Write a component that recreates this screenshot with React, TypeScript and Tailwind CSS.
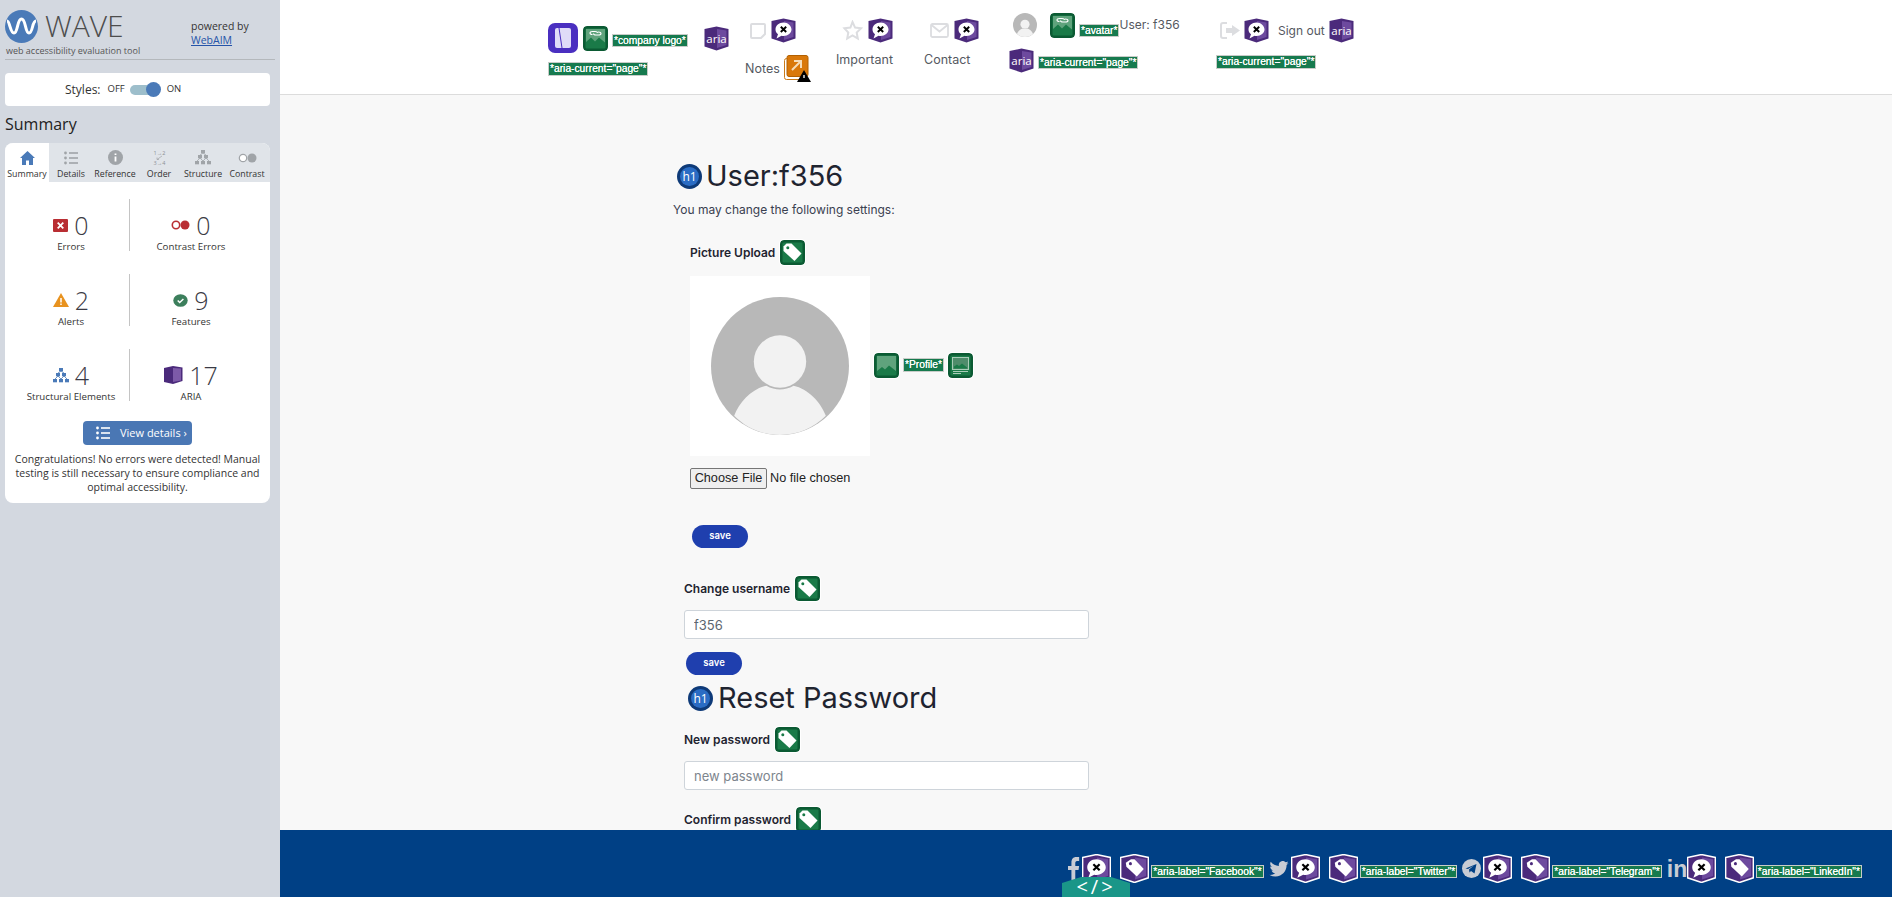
import type { ReactNode } from "react";

const stats = [
  { icon: "error", n: "0", label: "Errors" },
  { icon: "contrast", n: "0", label: "Contrast Errors" },
  { icon: "alert", n: "2", label: "Alerts" },
  { icon: "feature", n: "9", label: "Features" },
  { icon: "structure", n: "4", label: "Structural Elements" },
  { icon: "aria", n: "17", label: "ARIA" },
];

function Shield({ outline, children }: { outline?: boolean; children: ReactNode }) {
  return (
    <svg width={outline ? 29 : 25} height={outline ? 29 : 25} viewBox="0 0 25 25" className="shrink-0">
      <path d="M0.500 3 12.500 0.500 24.500 3V20.500L12.500 24.500 0.500 20.500Z" fill="#4b2a7b" stroke={outline ? "#ffffff" : "none"} strokeWidth={outline ? 1.4 : 0} />
      <path d="M13 3 22.500 4.500V19L13 22Z" fill="#6d4a9e" />
      {children}
    </svg>
  );
}

function XBadge({ outline }: { outline?: boolean }) {
  return (
    <Shield outline={outline}>
      <path d="M12.500 4.500C8 4.500 4.500 7.500 4.500 11.500c0 2 1 3.700 2.500 4.700L5.500 20.500l5-2.700c.7.200 1.300.200 2 .200 4.500 0 8-3 8-6.500S17 4.500 12.500 4.500Z" fill="#fff" />
      <path d="M9.800 8.800l5.400 5.200M15.200 8.800l-5.400 5.200" stroke="#000" strokeWidth="1.900" />
    </Shield>
  );
}

function AriaBadge() {
  return (
    <Shield>
      <text x="12.500" y="16.500" textAnchor="middle" fontSize="11.500" fill="#fff" fontFamily="'Open Sans', sans-serif">aria</text>
    </Shield>
  );
}

function TagPurple() {
  return (
    <Shield outline>
      <path d="M5 7.500 9.500 4.500h3l8 8.500-6 6.500-9-8.500Z" fill="#fff" />
      <circle cx="9" cy="8.300" r="1.300" fill="#4b2a7b" />
    </Shield>
  );
}

function GreenBox({ children }: { children: ReactNode }) {
  return (
    <svg width="25" height="25" viewBox="0 0 25 25" className="shrink-0 rounded-[4px] ring-1 ring-white">
      <rect width="25" height="25" rx="4" fill="#0b5a33" />
      <rect x="2.500" y="2.500" width="20" height="20" rx="1" fill="#1a7a48" />
      {children}
    </svg>
  );
}

function TagGreen() {
  return (
    <GreenBox>
      <path d="M3.500 6.500 6.500 3.500h5l10 10-7 7.500L3.500 11Z" fill="#fff" />
      <circle cx="7.800" cy="7.800" r="1.500" fill="#1a7a48" />
    </GreenBox>
  );
}

function LinkedImage() {
  return (
    <GreenBox>
      <rect x="3" y="3" width="19" height="19" fill="#5fa37c" />
      <path d="M3 22v-6l5-4.500 4 4 4-4 6 5V22Z" fill="#1a7a48" />
      <path d="M9.500 8.500c-2 0-2.500-.7-2.500-1.500s1-1.500 2.500-1.500h2.500c1.500 0 2.500.7 2.500 1.500M15 6c2 0 3 .7 3 1.500S17 9 15.500 9H13c-1.500 0-2.500-.7-2.500-1.500" stroke="#fff" strokeWidth="1.100" fill="none" />
    </GreenBox>
  );
}

function PlainImage() {
  return (
    <GreenBox>
      <rect x="3" y="3" width="19" height="19" fill="#5fa37c" />
      <path d="M3 22v-4l5-4 3 2.500 4-4 7 5.500v4Z" fill="#1a7a48" />
    </GreenBox>
  );
}

function LongAlt() {
  return (
    <GreenBox>
      <rect x="4.500" y="4.500" width="16" height="12" fill="#4f8c6b" stroke="#a9cdb8" />
      <path d="M6 15.500v-2l3-2 2 1.500 3-2.500 5 4v1Z" fill="#1a7a48" />
      <path d="M5 18.500h15M5 20.500h8" stroke="#a9cdb8" strokeWidth="1.200" />
    </GreenBox>
  );
}

function WaveLabel({ children }: { children: ReactNode }) {
  return (
    <span className="shrink-0 whitespace-nowrap border border-[#c8ccc8] bg-[#167a4e] px-px text-[10.250px] leading-[12px] font-normal text-white [text-shadow:0_0_0.6px_#fff] font-['Liberation_Sans',sans-serif]">
      {children}
    </span>
  );
}

function H1Badge() {
  return (
    <svg width="25" height="25" viewBox="0 0 25 25" className="shrink-0">
      <circle cx="12.500" cy="12.500" r="12.500" fill="#0e3a78" />
      <circle cx="12.500" cy="12.500" r="9.500" fill="#2a6cc4" />
      <text x="12.500" y="17" textAnchor="middle" fontSize="12" fill="#fff" fontFamily="'Open Sans', sans-serif">h1</text>
    </svg>
  );
}

function Avatar({ size }: { size: number }) {
  return (
    <svg width={size} height={size} viewBox="0 0 137 137" className="shrink-0">
      <circle cx="68.500" cy="68.500" r="68.500" fill="#b8b8b8" />
      <circle cx="68.500" cy="64" r="26" fill="#f2f2f2" />
      <path d="M23 118c5-14 18-27 32-30 9 5 18 5 27 0 14 3 27 16 32 30-12 12-27 19-45.500 19S35 130 23 118Z" fill="#f2f2f2" />
    </svg>
  );
}

function StructureIcon({ color }: { color: string }) {
  const cells = [
    [6, 0], [3, 5], [9, 5], [0, 11], [6, 11], [12, 11],
  ];
  return (
    <svg width="16" height="15" viewBox="0 0 16 15">
      <path d="M8 3 5 5M8 3l3 2M5 8 2 11M5 8l3 3M11 8l-3 3M11 8l3 3" stroke={color} strokeWidth="0.800" />
      {cells.map(([x, y]) => (
        <rect key={`${x}-${y}`} x={x} y={y} width="4" height="3.300" fill={color} />
      ))}
    </svg>
  );
}

function SummaryIcon({ name }: { name: string }) {
  if (name === "error") {
    return (
      <svg width="15" height="13" viewBox="0 0 15 13">
        <rect width="15" height="13" rx="1" fill="#b92e33" />
        <path d="M4.700 3.700l5.600 5.600M10.300 3.700 4.700 9.300" stroke="#fff" strokeWidth="1.800" />
      </svg>
    );
  }
  if (name === "contrast") {
    return (
      <svg width="19" height="10" viewBox="0 0 19 10">
        <circle cx="5" cy="5" r="3.700" fill="#fff" stroke="#b92e33" strokeWidth="1.600" />
        <circle cx="14" cy="5" r="4.500" fill="#b92e33" />
      </svg>
    );
  }
  if (name === "alert") {
    return (
      <svg width="16" height="14" viewBox="0 0 16 14">
        <path d="M8 0 16 14H0Z" fill="#e8921f" />
        <path d="M8 5v4.500M8 10.500v1.500" stroke="#fff" strokeWidth="1.500" />
      </svg>
    );
  }
  if (name === "feature") {
    return (
      <svg width="15" height="13" viewBox="0 0 15 13">
        <ellipse cx="7.500" cy="6.500" rx="7.200" ry="6.300" fill="#3c7f5c" />
        <path d="M4.700 6.500l2 2 3.700-3.500" stroke="#fff" strokeWidth="1.500" fill="none" />
      </svg>
    );
  }
  if (name === "structure") {
    return <StructureIcon color="#4a7ab8" />;
  }
  return (
    <svg width="19" height="18" viewBox="0 0 19 18">
      <path d="M0 2 9 0l9.500 1.500V15L9 18 0 16Z" fill="#4b2a7b" />
      <path d="M9 2l8 .5V14.500L9 16Z" fill="#7d5aa8" />
    </svg>
  );
}

function ListIcon({ color, w = 14 }: { color: string; w?: number }) {
  return (
    <svg width={w} height={w} viewBox="0 0 14 14">
      {[2, 7, 12].map((y) => (
        <g key={y}>
          <circle cx="1.500" cy={y} r="1.400" fill={color} />
          <rect x="5" y={y - 0.8} width="9" height="1.600" fill={color} />
        </g>
      ))}
    </svg>
  );
}

function TabItem({ label, active, children }: { label: string; active?: boolean; children: ReactNode }) {
  return (
    <div className={`w-[44px] h-[39px] flex flex-col items-center ${active ? "bg-white rounded-tl-lg" : ""}`}>
      <div className="h-[22px] flex items-end justify-center">{children}</div>
      <div className="mt-[3px] text-[8.800px] leading-[12px] whitespace-nowrap text-[#333]">{label}</div>
    </div>
  );
}

function Sidebar() {
  return (
    <aside className="w-[280px] shrink-0 h-full bg-[#d3d8e0] px-[5px] font-['Open_Sans',sans-serif] text-[#333]">
      <div className="flex h-[60px] border-b border-[#b4b8bc]">
        <div className="w-[186px]">
          <div className="flex items-center h-[32px] mt-[10px]">
            <svg width="33" height="33" viewBox="0 0 33 33" className="shrink-0">
              <circle cx="16.500" cy="16.500" r="16.500" fill="#4a7ab8" />
              <path d="M2 11c3 0 3 12 7 12s3-14 7.500-14S20 23 24 23s3-12 7-12" stroke="#fff" strokeWidth="3" fill="none" />
            </svg>
            <span className="ml-[7px] text-[30px] leading-[32px] font-light text-[#4d4d4d]">WAVE</span>
          </div>
          <div className="ml-px mt-[2px] text-[9px] leading-[14px] text-[#555] whitespace-nowrap">web accessibility evaluation tool</div>
        </div>
        <div className="mt-[19px] text-[10.500px] leading-[14px] text-[#333]">
          <div>powered by</div>
          <a className="text-[#2553a8] underline">WebAIM</a>
        </div>
      </div>
      <div className="mt-[13px] w-[265px] h-[33px] bg-white rounded flex items-center text-[11px]">
        <span className="ml-[60px] text-[12px]">Styles:</span>
        <span className="ml-[7px] text-[9.500px]">OFF</span>
        <div className="relative ml-[5px] w-[30px] h-[10px] rounded-full bg-[#9dbecb]">
          <span className="absolute right-[-1px] top-[-3px] w-[15px] h-[15px] rounded-full bg-[#4a7ab8]" />
        </div>
        <span className="ml-[7px] text-[9.500px]">ON</span>
      </div>
      <h2 className="mt-[6px] text-[16px] leading-[24px] text-[#222]">Summary</h2>
      <div className="mt-[7px] w-[265px] h-[360px] bg-white rounded-lg flex flex-col">
        <div className="flex h-[39px] shrink-0 bg-[#e0e4e9] rounded-t-lg">
          <TabItem label="Summary" active>
            <svg width="15" height="14" viewBox="0 0 15 14">
              <path d="M7.500 0 15 7h-2v7H9V9.500H6V14H2V7H0Z" fill="#4a7ab8" />
            </svg>
          </TabItem>
          <TabItem label="Details"><ListIcon color="#a0a4a8" /></TabItem>
          <TabItem label="Reference">
            <svg width="15" height="15" viewBox="0 0 15 15">
              <circle cx="7.500" cy="7.500" r="7.500" fill="#a0a4a8" />
              <path d="M7.500 6.500V11.500M7.500 3.500V5" stroke="#fff" strokeWidth="1.800" />
            </svg>
          </TabItem>
          <TabItem label="Order">
            <svg width="15" height="15" viewBox="0 0 15 15">
              <text x="7.500" y="5" textAnchor="middle" fontSize="5.500" fill="#8c9094">1→2</text>
              <path d="M10 6 5 9.500M5 7.500v2h2" stroke="#a0a4a8" strokeWidth="0.700" fill="none" />
              <text x="7.500" y="14.500" textAnchor="middle" fontSize="5.500" fill="#8c9094">3→4</text>
            </svg>
          </TabItem>
          <TabItem label="Structure"><StructureIcon color="#a0a4a8" /></TabItem>
          <TabItem label="Contrast">
            <svg width="19" height="10" viewBox="0 0 19 10" className="mb-[2px]">
              <circle cx="5" cy="5" r="3.700" fill="#fff" stroke="#a0a4a8" strokeWidth="1.200" />
              <circle cx="14" cy="5" r="4.500" fill="#a0a4a8" />
            </svg>
          </TabItem>
        </div>
        <div className="mt-[17px] grid grid-cols-[125px_122px] gap-y-[23px]">
          {stats.map((s, i) => (
            <div key={s.label} className={`h-[52px] flex flex-col items-center ${i % 2 === 0 ? "border-r border-[#c4c4c4] pl-[8px]" : ""}`}>
              <div className="mt-[10px] h-[32px] flex items-center gap-[6px]">
                <SummaryIcon name={s.icon} />
                <span className="text-[25px] leading-[32px] font-light text-[#3a3a44]">{s.n}</span>
              </div>
              <div className="mt-[-1px] text-[9.700px] leading-[14px] whitespace-nowrap">{s.label}</div>
            </div>
          ))}
        </div>
        <div className="mt-[20px] self-center w-[109px] h-[24px] rounded bg-[#4a77b4] flex items-center text-white text-[11px]">
          <span className="ml-[13px]"><ListIcon color="#fff" /></span>
          <span className="ml-[10px] whitespace-nowrap">View details ›</span>
        </div>
        <p className="mt-[7px] px-[5px] text-center text-[10.500px] leading-[14px] text-[#333]">
          Congratulations! No errors were detected! Manual testing is still necessary to ensure compliance and optimal accessibility.
        </p>
      </div>
    </aside>
  );
}

function NavItem({ icon, label }: { icon: ReactNode; label: string }) {
  return (
    <div className="flex flex-col">
      <div className="flex items-center gap-[5px] h-[25px]">
        {icon}
        <XBadge />
      </div>
      <div className="mt-[8px] ml-[-6px] text-[12.500px] leading-[18px] text-[#55595f]">{label}</div>
    </div>
  );
}

function Header() {
  return (
    <header className="h-[95px] shrink-0 bg-white border-b border-[#dcdcdc] flex items-start pl-[268px] font-['Inter',sans-serif]">
      <div className="w-[201px] pt-[23px]">
        <div className="flex items-center">
          <svg width="30" height="30" viewBox="0 0 30 30" className="shrink-0">
            <rect width="30" height="30" rx="7" fill="#4a2fc0" />
            <rect x="7" y="5" width="16" height="20" rx="2" fill="#e0dcf8" />
            <path d="M11 5l3 20" stroke="#4a2fc0" strokeWidth="1" />
          </svg>
          <span className="ml-[5px]"><LinkedImage /></span>
          <span className="ml-[4px]"><WaveLabel>*company logo*</WaveLabel></span>
          <span className="ml-[16px]"><AriaBadge /></span>
        </div>
        <div className="mt-[9px] flex"><WaveLabel>*aria-current="page"*</WaveLabel></div>
      </div>
      <div className="w-[93px] pt-[18px]">
        <div className="flex items-center gap-[4px] h-[25px]">
          <svg width="18" height="18" viewBox="0 0 18 18" fill="none" stroke="#dcdde0" strokeWidth="2">
            <path d="M2 3a1 1 0 0 1 1-1h12a1 1 0 0 1 1 1v9l-4 4H3a1 1 0 0 1-1-1Z" />
          </svg>
          <XBadge />
        </div>
        <div className="flex items-center mt-[12px] ml-[-4px]">
          <span className="text-[12.500px] leading-[18px] text-[#55595f]">Notes</span>
          <svg width="27" height="27" viewBox="0 0 27 27" className="ml-[4px]">
            <rect x="0.500" y="3.500" width="21" height="21" rx="2" fill="#fff" stroke="#c97a1a" />
            <rect x="3" y="0.500" width="21" height="21" rx="2" fill="#d9780a" stroke="#b26000" />
            <path d="M8 15l8-8M10 6h7v7" stroke="#f6dcb8" strokeWidth="2" fill="none" />
            <path d="M20 15l7 12H13Z" fill="#000" />
            <path d="M20 20v3" stroke="#fff" strokeWidth="1.300" />
          </svg>
        </div>
      </div>
      <div className="w-[88px] pt-[18px]">
        <NavItem
          label="Important"
          icon={
            <svg width="21" height="21" viewBox="0 0 21 21" fill="none" stroke="#dcdde0" strokeWidth="2">
              <path d="M10.500 2l2.600 5.600 6 .7-4.400 4.200 1.100 6-5.300-3-5.300 3 1.100-6L2.400 8.300l6-.7Z" />
            </svg>
          }
        />
      </div>
      <div className="w-[79px] pt-[18px]">
        <NavItem
          label="Contact"
          icon={
            <svg width="19" height="15" viewBox="0 0 19 15" fill="none" stroke="#dcdde0" strokeWidth="1.800">
              <rect x="1" y="1" width="17" height="13" rx="1.500" />
              <path d="M1.500 2l8 6.500 8-6.500" />
            </svg>
          }
        />
      </div>
      <div className="w-[207px] pt-[13px]">
        <div className="flex items-start">
          <span className="ml-[4px]"><Avatar size={24} /></span>
          <span className="ml-[13px]"><LinkedImage /></span>
          <span className="ml-[4px] mt-[3px]"><WaveLabel>*avatar*</WaveLabel></span>
          <span className="mt-[3px] text-[12px] leading-[18px] text-[#55595f] whitespace-nowrap">User: f356</span>
        </div>
        <div className="mt-[8px] flex items-center">
          <AriaBadge />
          <span className="ml-[4px] mt-[-2px]"><WaveLabel>*aria-current="page"*</WaveLabel></span>
        </div>
      </div>
      <div className="pt-[18px]">
        <div className="flex items-center h-[25px]">
          <svg width="21" height="17" viewBox="0 0 21 17" className="ml-[4px]">
            <path d="M7 1H3a2 2 0 0 0-2 2v11a2 2 0 0 0 2 2h4" fill="none" stroke="#dcdde0" strokeWidth="2" />
            <path d="M12 3l8 5.500-8 5.500v-3H6V6h6Z" fill="#dcdde0" />
          </svg>
          <span className="ml-[3px]"><XBadge /></span>
          <span className="ml-[9px] text-[12px] leading-[18px] text-[#55595f] whitespace-nowrap">Sign out</span>
          <span className="ml-[4px]"><AriaBadge /></span>
        </div>
        <div className="mt-[12px] flex"><WaveLabel>*aria-current="page"*</WaveLabel></div>
      </div>
    </header>
  );
}

function FieldLabel({ children }: { children: string }) {
  return (
    <div className="flex items-center gap-[5px] h-[25px]">
      <span className="text-[12px] font-semibold text-[#1f2430]">{children}</span>
      <TagGreen />
    </div>
  );
}

function SaveButton() {
  return (
    <div className="w-[56px] h-[23px] rounded-full bg-[#1f3fae] flex items-center justify-center text-white text-[9.500px] font-semibold">save</div>
  );
}

function TextBox({ value, placeholder }: { value?: string; placeholder?: string }) {
  return (
    <input
      readOnly
      value={value}
      placeholder={placeholder}
      className="block w-[405px] h-[29px] bg-white border border-[#ced4da] rounded-[3px] px-[9px] text-[13px] text-[#5c6670] placeholder:text-[#7d858d] outline-none"
    />
  );
}

function Content() {
  return (
    <main className="flex-1 min-h-0 overflow-hidden bg-[#f8f8f8] font-['Inter',sans-serif]">
      <div className="ml-[393px] pt-[61px]">
        <div className="flex items-center ml-[4px] h-[40px]">
          <H1Badge />
          <h1 className="ml-[4px] text-[29px] leading-[40px] font-normal text-[#1f2430]">User:f356</h1>
        </div>
        <p className="mt-[4px] text-[12px] leading-[20px] text-[#3a4050]">You may change the following settings:</p>
        <div className="ml-[17px] mt-[20px]">
          <FieldLabel>Picture Upload</FieldLabel>
          <div className="mt-[11px] flex items-center">
            <div className="w-[180px] h-[180px] bg-white flex items-center justify-center">
              <Avatar size={138} />
            </div>
            <div className="ml-[4px] mt-[-2px] flex items-center gap-[4px]">
              <PlainImage />
              <WaveLabel>*Profile*</WaveLabel>
              <LongAlt />
            </div>
          </div>
          <div className="mt-[12px] flex items-center h-[21px] text-[12.700px] text-[#222] font-['Liberation_Sans',sans-serif]">
            <span className="h-[21px] w-[77px] border border-[#767676] rounded-[2px] bg-[#efefef] flex items-center justify-center">Choose File</span>
            <span className="ml-[3px]">No file chosen</span>
          </div>
          <div className="ml-[2px] mt-[36px]"><SaveButton /></div>
        </div>
        <div className="ml-[11px] mt-[28px]">
          <FieldLabel>Change username</FieldLabel>
          <div className="mt-[9px]"><TextBox value="f356" /></div>
          <div className="ml-[2px] mt-[13px]"><SaveButton /></div>
          <div className="flex items-center ml-[4px] mt-[3px] h-[40px]">
            <H1Badge />
            <h1 className="ml-[5px] text-[29px] leading-[40px] font-normal text-[#1f2430] whitespace-nowrap">Reset Password</h1>
          </div>
          <div className="mt-[9px]"><FieldLabel>New password</FieldLabel></div>
          <div className="mt-[9px]"><TextBox placeholder="new password" /></div>
          <div className="mt-[17px]"><FieldLabel>Confirm password</FieldLabel></div>
        </div>
      </div>
    </main>
  );
}

function SocialGroup({ icon, label }: { icon: ReactNode; label: string }) {
  return (
    <div className="flex items-center">
      {icon}
      <XBadge outline />
      <span className="ml-[9px]"><TagPurple /></span>
      <span className="ml-[2px]"><WaveLabel>{label}</WaveLabel></span>
    </div>
  );
}

function Footer() {
  return (
    <footer className="relative h-[67px] shrink-0 bg-[#004085] flex items-start justify-end gap-[5px] pt-[24px] pr-[30px]">
      <SocialGroup
        label={'*aria-label="Facebook"*'}
        icon={
          <svg width="12" height="23" viewBox="0 0 14 23" preserveAspectRatio="none" className="shrink-0 mr-[2px]">
            <path d="M4 23V13H0V9h4V6c0-4 2-6 5.500-6H13v4h-2.500C9 4 8.500 5 8.500 6v3H13l-.7 4H8.500v10Z" fill="#c8ccd4" />
          </svg>
        }
      />
      <SocialGroup
        label={'*aria-label="Twitter"*'}
        icon={
          <svg width="20" height="16" viewBox="0 0 24 20" className="shrink-0 mr-[2px]">
            <path d="M24 2.400c-.9.400-1.800.7-2.800.8 1-.6 1.800-1.600 2.200-2.700-1 .6-2 1-3.100 1.200A4.900 4.900 0 0 0 11.900 6.200C7.800 6 4.100 4 1.700.9c-1.300 2.200-.7 5.100 1.500 6.600-.8 0-1.600-.2-2.200-.6 0 2.300 1.600 4.400 3.900 4.900-.7.200-1.500.2-2.200.1.600 2 2.400 3.400 4.600 3.400A9.900 9.900 0 0 1 0 17.300 14 14 0 0 0 7.500 19.500c9.100 0 14.300-7.700 14-14.600 1-.7 1.800-1.600 2.500-2.500Z" fill="#c8ccd4" />
          </svg>
        }
      />
      <SocialGroup
        label={'*aria-label="Telegram"*'}
        icon={
          <svg width="19" height="19" viewBox="0 0 19 19" className="shrink-0 mr-[2px]">
            <circle cx="9.500" cy="9.500" r="9.500" fill="#c8ccd4" />
            <path d="M3.500 9.500 14.500 5l-2 9.500-3.500-2.500-1.500 1.500-.5-3 5-4-6 3.500Z" fill="#004085" />
          </svg>
        }
      />
      <SocialGroup
        label={'*aria-label="LinkedIn"*'}
        icon={<span className="text-[23px] leading-[24px] font-bold text-[#c8ccd4] font-['Liberation_Sans',sans-serif] w-[20px] shrink-0">in</span>}
      />
      <div className="absolute left-[782px] bottom-0 w-[68px] h-[20px] bg-[#1a9688] [clip-path:polygon(0_30%,28%_0,72%_0,100%_30%,100%_100%,0_100%)] flex items-center justify-center text-white text-[20px] leading-[20px] tracking-[3px] font-['Open_Sans',sans-serif]">
        &lt;/&gt;
      </div>
    </footer>
  );
}

export default function App() {
  return (
    <div className="flex w-full h-screen overflow-hidden">
      <Sidebar />
      <div className="flex-1 min-w-0 h-full flex flex-col">
        <Header />
        <Content />
        <Footer />
      </div>
    </div>
  );
}
